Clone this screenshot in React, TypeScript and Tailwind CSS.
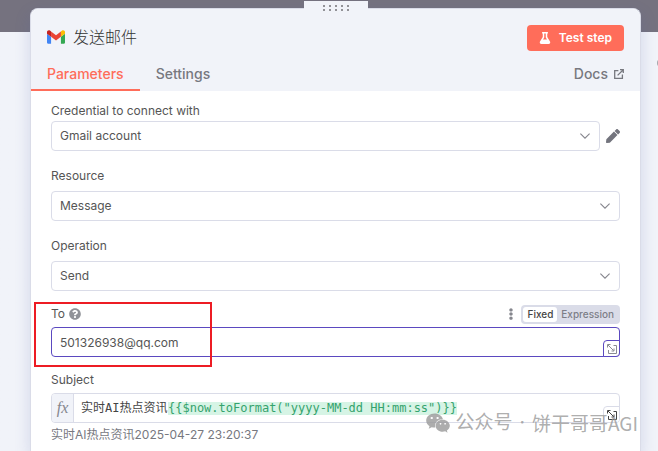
import { useState } from "react"
import { FaEllipsisV, FaFlask, FaPen, FaQuestionCircle, FaWeixin } from "react-icons/fa"

const TABS = ["Parameters", "Settings"]

function GmailIcon() {
    return (
        <svg viewBox="52 42 88 66" className="w-[18px] h-[14px]" aria-hidden="true">
            <path fill="#4285f4" d="M58 108h14V74L52 59v43c0 3.32 2.69 6 6 6" />
            <path fill="#34a853" d="M120 108h14c3.32 0 6-2.69 6-6V59l-20 15" />
            <path fill="#fbbc04" d="M120 48v26l20-15v-8c0-7.42-8.47-11.65-14.4-7.2" />
            <path fill="#ea4335" d="M72 74V48l24 18 24-18v26L96 92" />
            <path fill="#c5221f" d="M52 51v8l20 15V48l-5.6-4.2c-5.94-4.45-14.4-.22-14.4 7.2" />
        </svg>
    )
}

function DocsIcon() {
    return (
        <svg viewBox="0 0 10 10" className="w-2.5 h-2.5" fill="none" stroke="currentColor" strokeWidth="1.3" aria-hidden="true">
            <path d="M4.4 1.6H.7v7.7h7.7V5.6M3.6 6.4 9 1M6 .7h3.3V4" />
        </svg>
    )
}

function ExpandIcon() {
    return (
        <svg viewBox="0 0 10 10" className="w-2.5 h-2.5" fill="none" stroke="currentColor" aria-hidden="true">
            <path d="M1.5 6v3.5h8v-8H6.5M1 1l5.5 5.5M.5 3.5v-3h3M7 4.5V7H4.5" />
        </svg>
    )
}

function DragHandle() {
    return (
        <div className="absolute bottom-full left-1/2 -mb-2 -ml-8 pl-[19px] pt-1 w-16 h-4 bg-[#f1f3f9] grid grid-cols-[repeat(5,2px)] auto-rows-[2px] gap-x-1 gap-y-0.5">
            {Array.from({ length: 10 }, (_, i) => (
                <span key={i} className="bg-[#929297]" />
            ))}
        </div>
    )
}

function SelectBox({ id, value }: { id: string; value: string }) {
    return (
        <div className="relative flex-1">
            <select id={id} defaultValue={value} className="appearance-none block w-full h-[30px] px-2 rounded border border-[#dadce8] bg-white text-xs outline-none">
                <option>{value}</option>
            </select>
            <svg viewBox="0 0 10 6" className="absolute right-[10px] top-3 w-2.5 h-1.5 pointer-events-none" fill="none" stroke="#85858c" strokeWidth="1.1" aria-hidden="true">
                <path d="m.4.6 4.6 4.6L9.6.6" />
            </svg>
        </div>
    )
}

function Label({ id, text }: { id: string; text: string }) {
    return <label htmlFor={id} className="block text-xs leading-5">{text}</label>
}

export default function App() {
    const [activeTab, setActiveTab] = useState(TABS[0])
    const [mode, setMode] = useState("Fixed")
    const [to, setTo] = useState("501326938@qq.com")
    const [subject, setSubject] = useState("实时AI热点资讯")

    return (
        <div className="relative h-screen overflow-hidden flex flex-col bg-[#f1f3f9] bg-linear-to-b from-[#75727f] from-[32px] to-[#f1f3f9] to-[32px] pt-2 pl-[30px] pr-[17px] font-['Inter','Noto_Sans_CJK_SC',sans-serif] text-xs text-[#555555]">
            <span className="absolute top-[59px] left-full -ml-px w-2 h-2 rounded-full bg-[#a5a5ac]" />

            <main className="relative flex-1 flex flex-col rounded-t-lg border border-b-0 border-[#dadce8] bg-white shadow-[0_6px_16px_0_rgba(80,100,170,0.2)]">
                <DragHandle />

                <header className="rounded-t-lg bg-[#f1f3f9]">
                    <div className="flex items-start justify-between pt-4 px-4">
                        <h1 className="flex items-center gap-2 text-base leading-6 font-light text-[#333333]">
                            <GmailIcon />
                            发送邮件
                        </h1>
                        <button className="flex items-center gap-2 h-[26px] px-3 rounded bg-[#ff6d5a] text-white text-xs font-semibold">
                            <FaFlask className="w-3 h-3" />
                            Test step
                        </button>
                    </div>
                    <div className="flex items-start justify-between pt-[11px] pr-4 text-sm font-medium text-[#77787f]">
                        <nav className="flex">
                            {TABS.map((tab) => (
                                <button
                                    key={tab}
                                    onClick={() => setActiveTab(tab)}
                                    className={`h-[29px] px-4 pb-1 border-b-2 ${activeTab === tab ? "border-[#ff6d5a] text-[#ff6d5a]" : "border-transparent"}`}
                                >
                                    {tab}
                                </button>
                            ))}
                        </nav>
                        <a href="#docs" className="flex items-center gap-1.5 leading-6">
                            Docs
                            <DocsIcon />
                        </a>
                    </div>
                </header>

                <form className="px-5 pt-2.5" onSubmit={(e) => e.preventDefault()}>
                    <Label id="credential" text="Credential to connect with" />
                    <div className="flex items-center gap-1.5">
                        <SelectBox id="credential" value="Gmail account" />
                        <button type="button" aria-label="Edit credential" className="text-[#73747d]">
                            <FaPen className="w-3.5 h-3.5" />
                        </button>
                    </div>

                    <div className="flex flex-col gap-[5px] pt-[15px]">
                        <Label id="resource" text="Resource" />
                        <SelectBox id="resource" value="Message" />
                    </div>

                    <div className="flex flex-col gap-[5px] pt-[15px]">
                        <Label id="operation" text="Operation" />
                        <SelectBox id="operation" value="Send" />
                    </div>

                    <div className="relative pt-[13px]">
                        <div className="flex items-center justify-between pb-[3px]">
                            <div className="flex items-center gap-1">
                                <Label id="to" text="To" />
                                <FaQuestionCircle className="w-3 h-3 text-[#909298]" />
                            </div>
                            <div className="flex items-center gap-1">
                                <button type="button" aria-label="Options" className="text-[#85868d]">
                                    <FaEllipsisV className="w-3 h-3" />
                                </button>
                                <div className="flex h-[19px] p-0.5 rounded bg-[#dadce8] text-[10px] leading-[15px] font-medium">
                                    {["Fixed", "Expression"].map((m) => (
                                        <button
                                            key={m}
                                            type="button"
                                            onClick={() => setMode(m)}
                                            className={`px-1 rounded-[3px] ${mode === m ? "bg-white text-[#444444]" : "text-[#7d7e87]"}`}
                                        >
                                            {m}
                                        </button>
                                    ))}
                                </div>
                            </div>
                        </div>
                        <div className="relative">
                            <input
                                id="to"
                                value={to}
                                onChange={(e) => setTo(e.target.value)}
                                className="block w-full h-[30px] px-2 rounded border border-[#5b49c0] text-xs outline-none"
                            />
                            <button type="button" aria-label="Expand" className="absolute right-0 bottom-0 w-[17px] h-[17px] grid place-items-center rounded-tl rounded-br border border-[#5b49c0] bg-white text-[#8a8b92]">
                                <ExpandIcon />
                            </button>
                        </div>
                        <div className="absolute -left-[17px] top-[11px] w-[178px] h-[65px] border-2 border-[#ed1c24] pointer-events-none" />
                    </div>

                    <div className="flex flex-col gap-[3px] pt-[13px]">
                        <Label id="subject" text="Subject" />
                        <div className="relative flex h-[30px] rounded border border-[#dadce8] overflow-hidden font-['DejaVu_Sans_Mono','Noto_Sans_CJK_SC',monospace] text-xs leading-7 text-[#444444]">
                            <span className="w-[22px] shrink-0 text-center border-r border-[#dadce8] bg-[#f1f3f9] font-['Liberation_Serif',serif] italic text-base leading-7 text-[#85868d]">fx</span>
                            <input
                                id="subject"
                                value={subject}
                                onChange={(e) => setSubject(e.target.value)}
                                className="w-[94px] pl-[7px] outline-none"
                            />
                            <code className="self-center leading-[13px] whitespace-pre font-['DejaVu_Sans_Mono',monospace] bg-[#d6f4e5] text-[#35a36d]">
                                {'{{$now.toFormat("yyyy-MM-dd HH:mm:ss")}}'}
                            </code>
                            <button type="button" aria-label="Expand" className="absolute -right-px -bottom-px w-[17px] h-[17px] grid place-items-center rounded-tl border border-[#dadce8] bg-white text-[#444444]">
                                <ExpandIcon />
                            </button>
                        </div>
                    </div>
                    <p className="pt-0.5 text-xs leading-5 text-[#77787f]">实时AI热点资讯2025-04-27 23:20:37</p>
                </form>
            </main>

            <div className="absolute right-5 bottom-4 flex items-center gap-[7px] font-['Inter','Noto_Sans_CJK_SC',sans-serif] text-[19px] leading-6 text-[#999999]/80 pointer-events-none">
                <span className="flex items-center gap-1">
                    <FaWeixin className="w-[26px] h-[22px]" />
                    公众号
                </span>
                <span>·</span>
                <span className="font-['Noto_Sans_CJK_SC',sans-serif]">饼干哥哥AGI</span>
            </div>
        </div>
    )
}
